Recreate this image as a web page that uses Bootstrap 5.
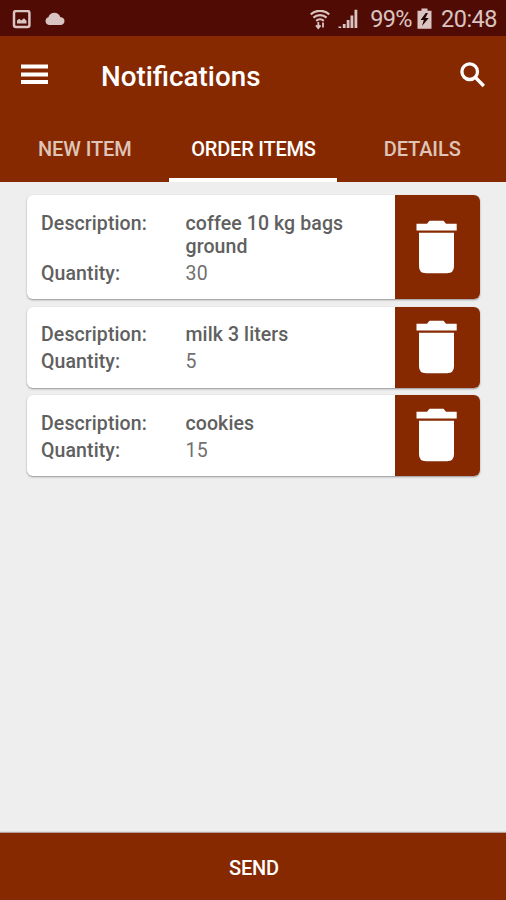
<!DOCTYPE html>
<html lang="en">
<head>
<meta charset="utf-8">
<meta name="viewport" content="width=device-width, initial-scale=1">
<title>Notifications</title>
<link href="https://cdn.jsdelivr.net/npm/bootstrap@5.3.0/dist/css/bootstrap.min.css" rel="stylesheet">
<style>
  :root { --brand: #862900; --status: #500c04; }
  body { font-family: Roboto, "Liberation Sans", sans-serif; background: #eee; }
  svg { display: block; flex: none; }
  .status-bar { height: 36px; background: var(--status); color: #d9c4c2; padding: 3px 9px 0 12px; font-size: 23.5px; line-height: 33px; }
  .status-bar .percent { letter-spacing: -.6px; margin-left: 12px; }
  .status-bar .clock { margin-left: 9px; letter-spacing: -.5px; }
  .status-bar .cloud { margin: 0 0 2px 13px; }
  .status-bar .battery { margin: 0 0 2px 5px; }
  .status-bar .signal { margin: 0 0 1px 8px; }
  .brand-bg { background: var(--brand); color: #fff; }
  .title-bar { height: 81px; padding: 0 20px 0 21px; }
  .title-bar svg { margin-bottom: 4px; }
  .title-bar h1 { font-size: 27.8px; font-weight: 500; margin-left: 53px; line-height: 32px; padding-top: 1px; }
  .tab-strip { height: 65px; }
  .tab-strip .nav-link { height: 65px; padding: 0 0 0 1px; color: #dfc4b9; font-size: 20px; font-weight: 500; line-height: 64px; border-bottom: 4px solid transparent; white-space: nowrap; letter-spacing: -.1px; }
  .tab-strip .nav-link.active { color: #fff; border-bottom-color: #fff; letter-spacing: -.2px; }
  .order-list { padding: 13px 26px 0 27px; gap: 7.5px; }
  .order { border: 0; border-radius: 6px; box-shadow: 0 1px 2px rgba(0,0,0,.38); }
  .order dl { padding: 16.5px 14px 14.500px; font-size: 19.500px; line-height: 23px; color: #606060; row-gap: 4px; display: grid; grid-template-columns: 144.500px 180px; }
  .order dt, .order .item-name { font-weight: 500; letter-spacing: .1px; }
  .order .amount { letter-spacing: .3px; color: #707070; }
  .delete-btn { width: 85px; border: 0; border-radius: 0 6px 6px 0; padding: 0 2px 1px 0; }
  .send-btn { height: 67px; border: 0; border-radius: 0; font-size: 20px; font-weight: 500; letter-spacing: -.2px; padding: 2px 0 0 2px; box-shadow: 0 -1px 1px rgba(80,12,4,.35); }
  .send-btn:hover, .delete-btn:hover { background: var(--brand); color: #fff; }
</style>
</head>
<body class="d-flex flex-column vh-100 overflow-hidden">
<div class="status-bar d-flex align-items-center">
  <svg width="20" height="20" viewBox="0 0 20 20"><rect x="2" y="1" width="15.400" height="16" rx="2" fill="none" stroke="#d9c4c2" stroke-width="2.500"/><path d="M5 13.400v-3l2.200-1.600 2 1.700L12 8.200l2.500 2.500v2.700z" fill="#d9c4c2"/></svg>
  <svg class="cloud" width="20" height="14" viewBox="0 0 20 14"><path d="M4 13a4 4 0 0 1-.6-7.800C4.200 2.500 6.500.8 9.400.8c3 0 5.100 1.700 5.800 4.200C18 5.200 19.500 7 19.500 9s-1.500 4-4 4z" fill="#d9c4c2"/></svg>
  <svg class="ms-auto" width="20" height="20" viewBox="0 0 20 20" fill="none" stroke="#d9c4c2" stroke-width="2.200"><path d="M.8 4.300C6.200-.4 13.800-.4 19.200 4.300M3.400 7.600c3.800-3.300 9.400-3.300 13.200 0M6.200 10.800c2.200-1.900 5.400-1.900 7.600 0"/><path d="M8.300 12v6m-2.300-2.600 2.300 2.600 2.200-2.600M13 17.500V12.500" stroke-width="1.800"/></svg>
  <svg class="signal" width="20" height="20" viewBox="0 0 20 20" fill="#d9c4c2"><path d="M.5 17.500h2.700V19H.5zM4.800 15h2.800v4H4.800zM8.700 11h2.800v8H8.700zM12.500 6.500h2.800V19h-2.800zM16.500.8h2.800V19h-2.800z"/></svg>
  <span class="percent">99%</span>
  <svg class="battery" width="15" height="21" viewBox="0 0 15 21"><path d="M4.500.5h6v2.300H14.500v18H.5v-18h4z" fill="#d9c4c2"/><path d="M8.700 5 3.600 12h3.200L5 18l6.800-8H8.300L11 5z" fill="#240503"/></svg>
  <span class="clock">20:48</span>
</div>
<header class="brand-bg">
  <div class="title-bar d-flex align-items-center">
    <svg width="27" height="21" viewBox="0 0 27 21" fill="#fff"><path d="M0 .5h27v4H0zM0 8.500h27v4H0zM0 16h27v4H0z"/></svg>
    <h1 class="mb-0">Notifications</h1>
    <svg class="ms-auto" width="26" height="26" viewBox="0 0 26 26" fill="none" stroke="#fff" stroke-width="3.300"><circle cx="9.700" cy="9.700" r="7.800"/><path d="m15 15 8.800 9"/></svg>
  </div>
  <nav class="tab-strip nav nav-justified row g-0">
    <a class="nav-link col-4" href="#">NEW ITEM</a>
    <a class="nav-link col-4 active" href="#">ORDER ITEMS</a>
    <a class="nav-link col-4" href="#">DETAILS</a>
  </nav>
</header>
<main class="order-list d-flex flex-column flex-grow-1">
  <article class="order card flex-row">
    <dl class="mb-0 flex-grow-1"><dt>Description:</dt><dd class="item-name mb-0">coffee 10 kg bags ground</dd><dt>Quantity:</dt><dd class="amount mb-0">30</dd></dl>
    <button class="delete-btn btn brand-bg d-flex align-items-center justify-content-center" aria-label="Delete"><svg width="42" height="54" viewBox="0 0 42 54" fill="#fff"><path d="M.5 3.800H11L13.500.8h14l2.500 3h10.700v6.700H.5zM3 12.800h35v33.500q0 7-7 7H10q-7 0-7-7z"/></svg></button>
  </article>
  <article class="order card flex-row">
    <dl class="mb-0 flex-grow-1"><dt>Description:</dt><dd class="item-name mb-0">milk 3 liters</dd><dt>Quantity:</dt><dd class="amount mb-0">5</dd></dl>
    <button class="delete-btn btn brand-bg d-flex align-items-center justify-content-center" aria-label="Delete"><svg width="42" height="54" viewBox="0 0 42 54" fill="#fff"><path d="M.5 3.800H11L13.500.8h14l2.500 3h10.700v6.700H.5zM3 12.800h35v33.500q0 7-7 7H10q-7 0-7-7z"/></svg></button>
  </article>
  <article class="order card flex-row">
    <dl class="mb-0 flex-grow-1"><dt>Description:</dt><dd class="item-name mb-0">cookies</dd><dt>Quantity:</dt><dd class="amount mb-0">15</dd></dl>
    <button class="delete-btn btn brand-bg d-flex align-items-center justify-content-center" aria-label="Delete"><svg width="42" height="54" viewBox="0 0 42 54" fill="#fff"><path d="M.5 3.800H11L13.500.8h14l2.500 3h10.700v6.700H.5zM3 12.800h35v33.500q0 7-7 7H10q-7 0-7-7z"/></svg></button>
  </article>
</main>
<button class="send-btn btn brand-bg w-100 flex-shrink-0">SEND</button>
<script src="https://cdn.jsdelivr.net/npm/bootstrap@5.3.0/dist/js/bootstrap.bundle.min.js"></script>
</body>
</html>
